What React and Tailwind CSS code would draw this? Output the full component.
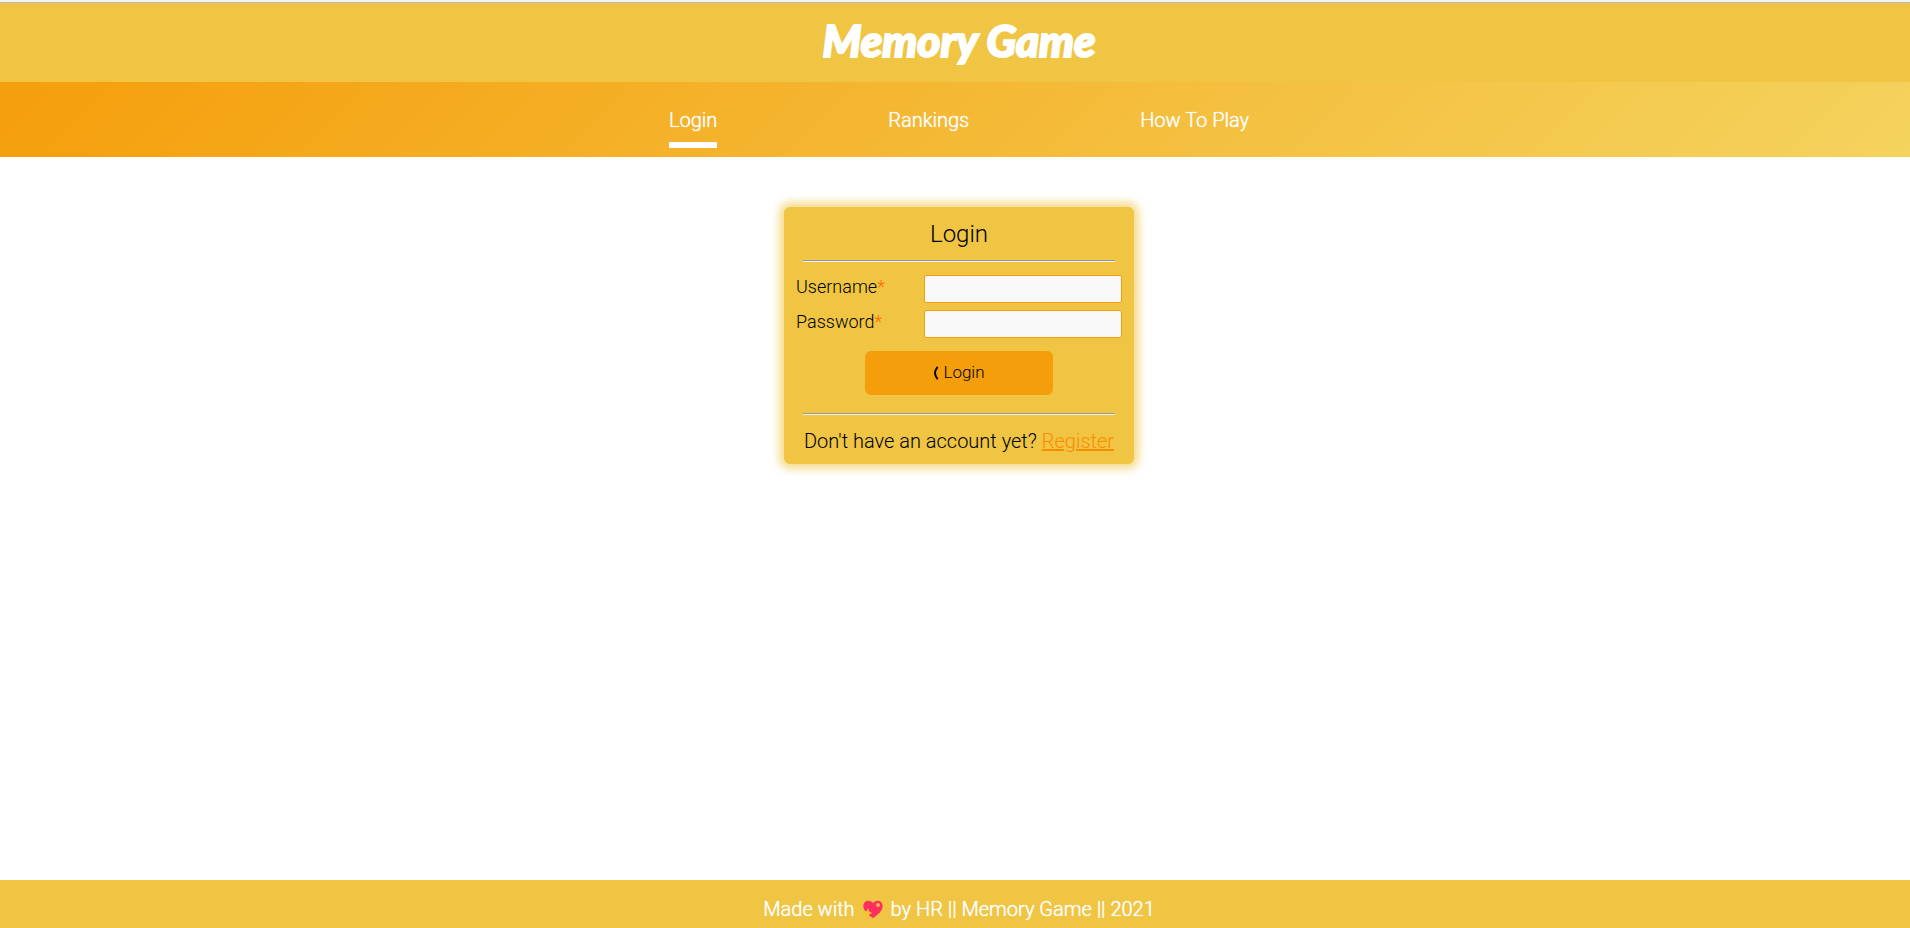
const navItems = [
  { label: 'Login', active: true },
  { label: 'Rankings', active: false },
  { label: 'How To Play', active: false },
];

function Divider() {
  return <hr className="mx-auto w-[312px] border-t border-b border-t-[#999999] border-b-[#eeeeee]" />;
}

function Field({ id, label, type }) {
  return (
    <div className="flex items-start justify-between">
      <label htmlFor={id} className="text-lg leading-6">
        {label}
        <span className="text-[#ff6a00]">*</span>
      </label>
      <input
        id={id}
        type={type}
        className="h-7 w-[198px] rounded-xs border border-[#f59e0b] bg-[#f9f9f9] px-2 text-base outline-none"
      />
    </div>
  );
}

function SparklingHeart() {
  return (
    <svg viewBox="0 0 20 19" className="mx-2 h-[19px] w-5" role="img" aria-label="love">
      <path
        d="M10 18.2C6.4 15.8.3 11.4.3 6.1.3 2.8 2.6.7 5.4.7 7.4.7 9 1.7 10 3.3 11 1.7 12.7.7 14.7.7c2.9 0 5 2.200 5 5.400 0 5.300-6.100 9.700-9.700 12.100z"
        fill="#ff2d60"
      />
      <path d="M0 10l5 2v7H0z" fill="#efc543" />
      <path d="M5 8l1.200 3.600 3 1.400-3 1.400L5 18.500l-1.500-3.800L0 13l3.500-1.400z" fill="#f9c52f" />
      <circle cx="15" cy="5" r="1.900" fill="#f7c244" />
    </svg>
  );
}

export default function App() {
  return (
    <div className="flex min-h-screen flex-col bg-white font-['Roboto',sans-serif] font-light text-black">
      <header>
        <div className="h-[3px] border-b border-[#bbbbbb] bg-[#f1f4f5]" />
        <div className="flex h-[79px] justify-center bg-[#efc543] pl-2">
          <h1 className="font-['Lato',sans-serif] text-[44px] leading-[74px] font-black text-white italic [-webkit-text-stroke:2px_white]">
            Memory Game
          </h1>
        </div>
        <nav className="flex h-[75px] justify-center gap-[171px] bg-[linear-gradient(135deg,#f59e0b,#f4d35e)] pt-6 pl-2">
          {navItems.map(({ label, active }) => (
            <a
              key={label}
              href="#"
              className={
                active
                  ? 'h-[42px] border-b-[6px] border-white text-xl leading-7 text-white text-shadow-[0_0_1px_white]'
                  : 'h-[42px] text-xl leading-7 text-white text-shadow-[0_0_1px_white]'
              }
            >
              {label}
            </a>
          ))}
        </nav>
      </header>

      <main className="flex grow flex-col items-center pt-[50px] pl-2">
        <form className="w-[350px] rounded-md bg-[#efc543] px-3 pt-[13px] pb-2 shadow-[0_0_8px_5px_#efc54399]">
          <h2 className="pb-[11px] text-center text-2xl leading-[29px]">Login</h2>
          <Divider />
          <div className="flex flex-col gap-[7px] pt-[13px]">
            <Field id="username" label="Username" type="text" />
            <Field id="password" label="Password" type="password" />
          </div>
          <button
            type="submit"
            className="mx-auto mt-[13px] mb-[18px] flex h-11 w-[188px] items-center justify-center gap-1 rounded-md bg-[#f59e0b] text-[17px]"
          >
            <svg viewBox="0 0 6 14" className="h-[14px] w-[6px]" aria-hidden="true">
              <path d="M4.600.800C3 3 2 5 2 7s1 4 2.600 6.200" fill="none" stroke="#000" strokeWidth="2" />
            </svg>
            Login
          </button>
          <Divider />
          <p className="pt-3 pb-px text-center text-xl leading-7">
            Don't have an account yet?{' '}
            <a href="#" className="text-[#ff8c00] underline">
              Register
            </a>
          </p>
        </form>
      </main>

      <footer className="flex h-12 items-center justify-center bg-[#efc543] pt-2.5 pl-2 text-xl leading-7 text-white text-shadow-[0_0_1px_white]">
        <span>Made with</span>
        <SparklingHeart />
        <span>by HR || Memory Game || 2021</span>
      </footer>
    </div>
  );
}
